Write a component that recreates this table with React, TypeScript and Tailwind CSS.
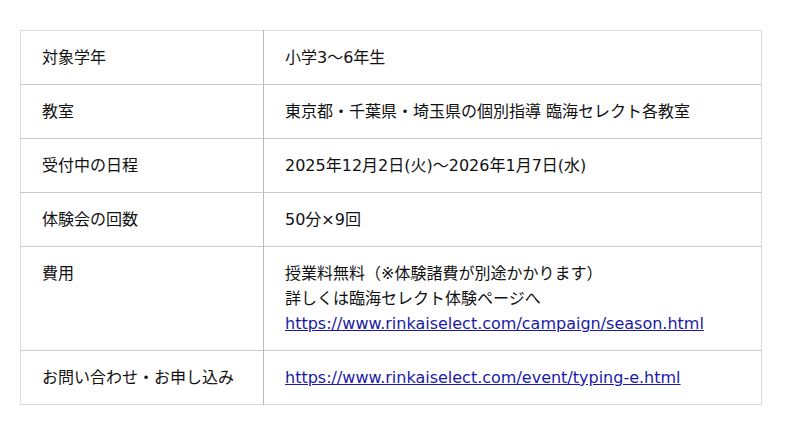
const ROWS: { label: string; lines: { text: string; href?: string }[] }[] = [
  { label: "対象学年", lines: [{ text: "小学3〜6年生" }] },
  { label: "教室", lines: [{ text: "東京都・千葉県・埼玉県の個別指導 臨海セレクト各教室" }] },
  { label: "受付中の日程", lines: [{ text: "2025年12月2日(火)〜2026年1月7日(水)" }] },
  { label: "体験会の回数", lines: [{ text: "50分×9回" }] },
  {
    label: "費用",
    lines: [
      { text: "授業料無料（※体験諸費が別途かかります）" },
      { text: "詳しくは臨海セレクト体験ページへ" },
      {
        text: "https://www.rinkaiselect.com/campaign/season.html",
        href: "https://www.rinkaiselect.com/campaign/season.html",
      },
    ],
  },
  {
    label: "お問い合わせ・お申し込み",
    lines: [
      {
        text: "https://www.rinkaiselect.com/event/typing-e.html",
        href: "https://www.rinkaiselect.com/event/typing-e.html",
      },
    ],
  },
];

export default function App() {
  return (
    <div
      className="w-[800px] h-[435px] bg-white pt-[30px] pl-[20px]"
      style={{ fontFamily: '"DejaVu Sans", "Noto Sans CJK JP", sans-serif' }}
    >
      <table className="w-[742px] border-collapse border border-[#dcdcdc] text-[16px] leading-[25px] text-[#111]">
        <tbody>
          {ROWS.map((row, i) => (
            <tr key={i} className="border-t border-[#c8c8c8] first:border-t-[#dcdcdc]">
              <td className="w-[243px] align-top py-[14px] pl-[21px] pr-4 border-r border-[#bbbbbb]">
                {row.label}
              </td>
              <td className="align-top py-[14px] pl-[21px] pr-4">
                {row.lines.map((l, j) => (
                  <div key={j}>
                    {l.href ? (
                      <a href={l.href} className="text-[#1a1aa6] underline">
                        {l.text}
                      </a>
                    ) : (
                      l.text
                    )}
                  </div>
                ))}
              </td>
            </tr>
          ))}
        </tbody>
      </table>
    </div>
  );
}
